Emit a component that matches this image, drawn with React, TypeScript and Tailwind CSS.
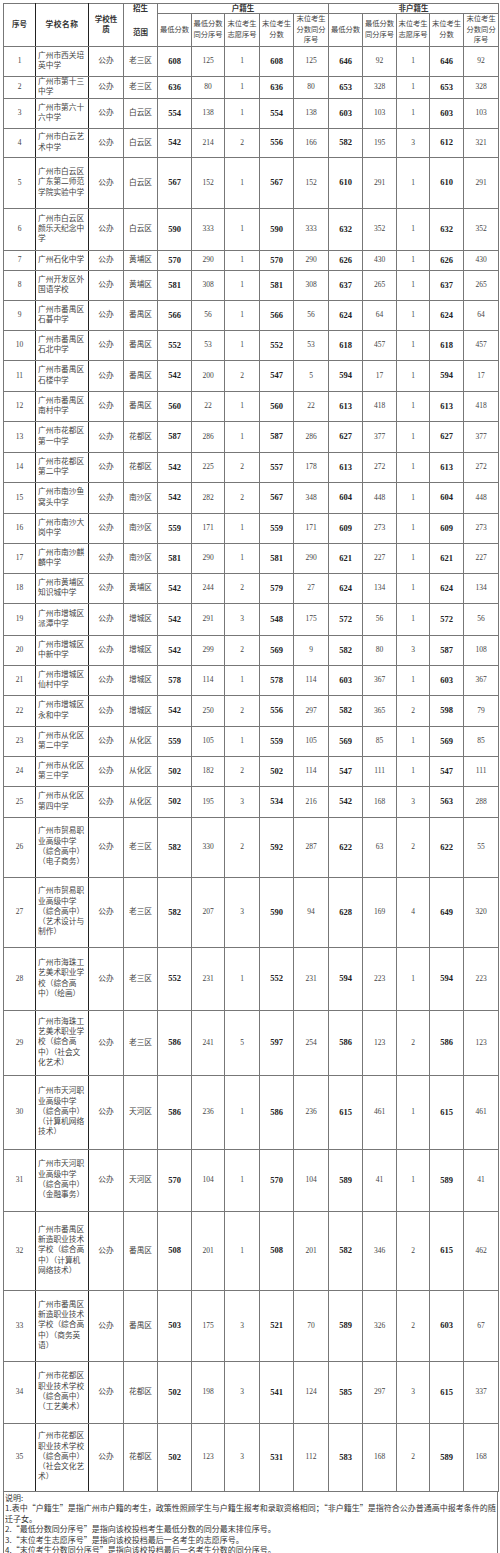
import React from "react";

type Row = {
  no: number;
  name: string[];
  area: string;
  hk: number[];
  fhk: number[];
  h: string;
};

const rows: Row[] = [
  { no: 1, name: ["广州市西关培", "英中学"], area: "老三区", hk: [608, 125, 1, 608, 125], fhk: [646, 92, 1, 646, 92], h: "h-[30px]" },
  { no: 2, name: ["广州市第十三", "中学"], area: "老三区", hk: [636, 80, 1, 636, 80], fhk: [653, 328, 1, 653, 328], h: "h-[22px]" },
  { no: 3, name: ["广州市第六十", "六中学"], area: "白云区", hk: [554, 138, 1, 554, 138], fhk: [603, 103, 1, 603, 103], h: "h-[30px]" },
  { no: 4, name: ["广州市白云艺", "术中学"], area: "白云区", hk: [542, 214, 2, 556, 166], fhk: [582, 195, 3, 612, 321], h: "h-[29px]" },
  { no: 5, name: ["广州市白云区", "广东第二师范", "学院实验中学"], area: "白云区", hk: [567, 152, 1, 567, 152], fhk: [610, 291, 1, 610, 291], h: "h-[51px]" },
  { no: 6, name: ["广州市白云区", "颜乐天纪念中", "学"], area: "白云区", hk: [590, 333, 1, 590, 333], fhk: [632, 352, 1, 632, 352], h: "h-[42px]" },
  { no: 7, name: ["广州石化中学"], area: "黄埔区", hk: [570, 290, 1, 570, 290], fhk: [626, 430, 1, 626, 430], h: "h-[20px]" },
  { no: 8, name: ["广州开发区外", "国语学校"], area: "黄埔区", hk: [581, 308, 1, 581, 308], fhk: [637, 265, 1, 637, 265], h: "h-[30px]" },
  { no: 9, name: ["广州市番禺区", "石碁中学"], area: "番禺区", hk: [566, 56, 1, 566, 56], fhk: [624, 64, 1, 624, 64], h: "h-[30px]" },
  { no: 10, name: ["广州市番禺区", "石北中学"], area: "番禺区", hk: [552, 53, 1, 552, 53], fhk: [618, 457, 1, 618, 457], h: "h-[30px]" },
  { no: 11, name: ["广州市番禺区", "石楼中学"], area: "番禺区", hk: [542, 200, 2, 547, 5], fhk: [594, 17, 1, 594, 17], h: "h-[31px]" },
  { no: 12, name: ["广州市番禺区", "南村中学"], area: "番禺区", hk: [560, 22, 1, 560, 22], fhk: [613, 418, 1, 613, 418], h: "h-[30px]" },
  { no: 13, name: ["广州市花都区", "第一中学"], area: "花都区", hk: [587, 286, 1, 587, 286], fhk: [627, 377, 1, 627, 377], h: "h-[31px]" },
  { no: 14, name: ["广州市花都区", "第二中学"], area: "花都区", hk: [542, 225, 2, 557, 178], fhk: [613, 272, 1, 613, 272], h: "h-[30px]" },
  { no: 15, name: ["广州市南沙鱼", "窝头中学"], area: "南沙区", hk: [542, 282, 2, 567, 348], fhk: [604, 448, 1, 604, 448], h: "h-[31px]" },
  { no: 16, name: ["广州市南沙大", "岗中学"], area: "南沙区", hk: [559, 171, 1, 559, 171], fhk: [609, 273, 1, 609, 273], h: "h-[30px]" },
  { no: 17, name: ["广州市南沙麒", "麟中学"], area: "南沙区", hk: [581, 290, 1, 581, 290], fhk: [621, 227, 1, 621, 227], h: "h-[30px]" },
  { no: 18, name: ["广州市黄埔区", "知识城中学"], area: "黄埔区", hk: [542, 244, 2, 579, 27], fhk: [624, 134, 1, 624, 134], h: "h-[30px]" },
  { no: 19, name: ["广州市增城区", "派潭中学"], area: "增城区", hk: [542, 291, 3, 548, 175], fhk: [572, 56, 1, 572, 56], h: "h-[32px]" },
  { no: 20, name: ["广州市增城区", "中新中学"], area: "增城区", hk: [542, 299, 2, 569, 9], fhk: [582, 80, 3, 587, 108], h: "h-[30px]" },
  { no: 21, name: ["广州市增城区", "仙村中学"], area: "增城区", hk: [578, 114, 1, 578, 114], fhk: [603, 367, 1, 603, 367], h: "h-[30px]" },
  { no: 22, name: ["广州市增城区", "永和中学"], area: "增城区", hk: [542, 250, 2, 556, 297], fhk: [582, 365, 2, 598, 79], h: "h-[31px]" },
  { no: 23, name: ["广州市从化区", "第二中学"], area: "从化区", hk: [559, 105, 1, 559, 105], fhk: [569, 85, 1, 569, 85], h: "h-[30px]" },
  { no: 24, name: ["广州市从化区", "第三中学"], area: "从化区", hk: [502, 182, 2, 502, 114], fhk: [547, 111, 1, 547, 111], h: "h-[30px]" },
  { no: 25, name: ["广州市从化区", "第四中学"], area: "从化区", hk: [502, 195, 3, 534, 216], fhk: [542, 168, 3, 563, 288], h: "h-[31px]" },
  { no: 26, name: ["广州市贸易职", "业高级中学", "（综合高中）", "（电子商务）"], area: "老三区", hk: [582, 330, 2, 592, 287], fhk: [622, 63, 2, 622, 55], h: "h-[60px]" },
  { no: 27, name: ["广州市贸易职", "业高级中学", "（综合高中）", "（艺术设计与", "制作）"], area: "老三区", hk: [582, 207, 3, 590, 94], fhk: [628, 169, 4, 649, 320], h: "h-[70px]" },
  { no: 28, name: ["广州市海珠工", "艺美术职业学", "校（综合高", "中）（绘画）"], area: "老三区", hk: [552, 231, 1, 552, 231], fhk: [594, 223, 1, 594, 223], h: "h-[63px]" },
  { no: 29, name: ["广州市海珠工", "艺美术职业学", "校（综合高", "中）（社会文", "化艺术）"], area: "老三区", hk: [586, 241, 5, 597, 254], fhk: [586, 123, 2, 586, 123], h: "h-[65px]" },
  { no: 30, name: ["广州市天河职", "业高级中学", "（综合高中）", "（计算机网络", "技术）"], area: "天河区", hk: [586, 236, 1, 586, 236], fhk: [615, 461, 1, 615, 461], h: "h-[74px]" },
  { no: 31, name: ["广州市天河职", "业高级中学", "（综合高中）", "（金融事务）"], area: "天河区", hk: [570, 104, 1, 570, 104], fhk: [589, 41, 1, 589, 41], h: "h-[62px]" },
  { no: 32, name: ["广州市番禺区", "新造职业技术", "学校（综合高", "中）（计算机", "网络技术）"], area: "番禺区", hk: [508, 201, 1, 508, 201], fhk: [582, 346, 2, 615, 462], h: "h-[79px]" },
  { no: 33, name: ["广州市番禺区", "新造职业技术", "学校（综合高", "中）（商务英", "语）"], area: "番禺区", hk: [503, 175, 3, 521, 70], fhk: [589, 326, 2, 603, 67], h: "h-[71px]" },
  { no: 34, name: ["广州市花都区", "职业技术学校", "（综合高中）", "（工艺美术）"], area: "花都区", hk: [502, 198, 3, 541, 124], fhk: [585, 297, 3, 615, 337], h: "h-[62px]" },
  { no: 35, name: ["广州市花都区", "职业技术学校", "（综合高中）", "（社会文化艺", "术）"], area: "花都区", hk: [502, 123, 3, 531, 112], fhk: [583, 168, 2, 589, 168], h: "h-[68px]" },
];

const colWidths = [32, 53, 35, 34, 34, 33, 35, 34, 35, 34, 34, 33, 34, 35];

const subHeads: string[][] = [
  ["最低分数"],
  ["最低分数", "同分序号"],
  ["末位考生", "志愿序号"],
  ["末位考生", "分数"],
  ["末位考生", "分数同分", "序号"],
];

const cell = "border border-[#777] p-0 text-center align-middle";
const darkRight = "border-r-[#222]";

const NumCells = ({ vals }: { vals: number[] }) => (
  <>
    {vals.map((v, i) => {
      const bold = i === 0 || i === 3;
      return (
        <td
          key={i}
          className={`${cell} ${
            bold ? "font-bold text-[8.5px] text-[#222]" : "text-[7.5px] text-[#444]"
          }`}
        >
          {v}
        </td>
      );
    })}
  </>
);

export default function App() {
  return (
    <div className="bg-white pl-[3px] pt-[3px] font-['Liberation_Serif','Noto_Sans_CJK_SC',serif] text-[#333]">
      <table className="table-fixed border-collapse w-[495px]">
        <colgroup>
          {colWidths.map((w, i) => (
            <col key={i} style={{ width: w }} />
          ))}
        </colgroup>
        <thead>
          <tr className="h-[10px]">
            <th rowSpan={2} className={`${cell} ${darkRight} text-[7.5px] font-bold leading-[10px]`}>
              序号
            </th>
            <th rowSpan={2} className={`${cell} ${darkRight} text-[7.7px] font-bold leading-[10px] tracking-[0.5px]`}>
              学校名称
            </th>
            <th rowSpan={2} className={`${cell} text-[7.5px] font-bold leading-[10px]`}>
              学校性
              <br />质
            </th>
            <th rowSpan={2} className={`${cell} align-top text-[7.5px] font-bold leading-[10px]`}>
              <div>招生</div>
              <div className="h-[14px]" />
              <div>范围</div>
            </th>
            <th colSpan={5} className={`${cell} text-[7.5px] font-bold leading-[9px]`}>
              户籍生
            </th>
            <th colSpan={5} className={`${cell} text-[7.5px] font-bold leading-[9px]`}>
              非户籍生
            </th>
          </tr>
          <tr className="h-[30px]">
            {[0, 1].flatMap((g) =>
              subHeads.map((lines, i) => (
                <th
                  key={`${g}-${i}`}
                  className={`${cell} whitespace-nowrap text-[7.3px] font-normal leading-[10.5px] text-[#444]`}
                >
                  {lines.map((l, j) => (
                    <div key={j}>{l}</div>
                  ))}
                </th>
              ))
            )}
          </tr>
        </thead>
        <tbody>
          {rows.map((r) => (
            <tr key={r.no} className={r.h}>
              <td className={`${cell} ${darkRight} text-[7.5px] text-[#444]`}>{r.no}</td>
              <td
                className={`${cell} ${darkRight} whitespace-nowrap pl-[2px] text-left text-[7.7px] leading-[10.3px] text-[#444]`}
              >
                {r.name.map((l, i) => (
                  <div key={i}>{l}</div>
                ))}
              </td>
              <td className={`${cell} text-[7.7px] text-[#444]`}>公办</td>
              <td className={`${cell} text-[7.7px] text-[#444]`}>{r.area}</td>
              <NumCells vals={r.hk} />
              <NumCells vals={r.fhk} />
            </tr>
          ))}
        </tbody>
      </table>
      <div className="w-[495px] h-[64px] border-x border-b border-[#777] pl-[1px] pt-[1px] text-[8px] leading-[10.6px] text-[#333] whitespace-nowrap font-['Noto_Sans_CJK_SC',sans-serif]">
        <div>说明:</div>
        <div>
          1.表中“户籍生”是指广州市户籍的考生，政策性照顾学生与户籍生报考和录取资格相同；“非户籍生”是指符合公办普通高中报考条件的随
        </div>
        <div>迁子女。</div>
        <div>2.“最低分数同分序号”是指向该校投档考生最低分数的同分最末排位序号。</div>
        <div>3.“末位考生志愿序号”是指向该校投档最后一名考生的志愿序号。</div>
        <div>4.“末位考生分数同分序号”是指向该校投档最后一名考生分数的同分序号。</div>
      </div>
    </div>
  );
}
